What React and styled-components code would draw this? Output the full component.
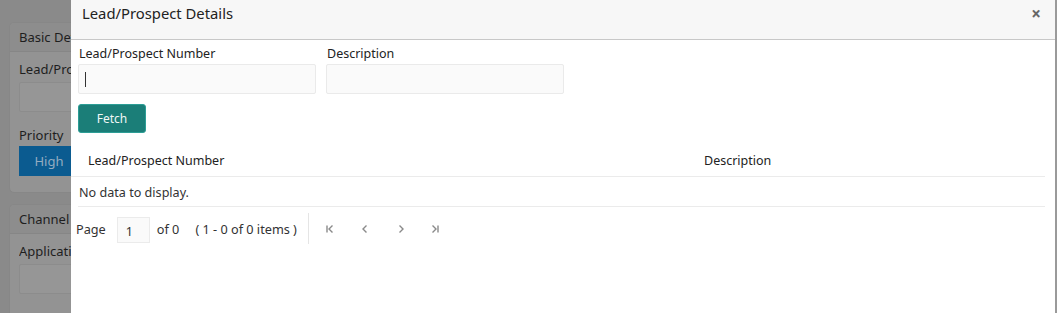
import React from "react";
import styled, { createGlobalStyle } from "styled-components";

const Global = createGlobalStyle`
  html, body { margin: 0; padding: 0; }
  body {
    width: 1057px; height: 313px; overflow: hidden;
    font-family: "Noto Sans", "Open Sans", sans-serif;
    background: #8a8a8a;
  }
`;

const Page = styled.div`
  position: relative;
  width: 1057px;
  height: 313px;
  overflow: hidden;
  background: #8a8a8a;
  padding: 22px 0 0 9px;
  box-sizing: border-box;
  display: flex;
  flex-direction: column;
  gap: 11px;
`;

const BgPanel = styled.div`
  width: 66px;
  background: #939393;
  border: 1px solid #878787;
  border-radius: 5px;
  overflow: hidden;
  flex-shrink: 0;
  white-space: nowrap;
`;

const BgPanelHead = styled.div`
  height: 28px;
  background: #8d8d8d;
  border-bottom: 1px solid #868686;
  padding-left: 9px;
  display: flex;
  align-items: center;
  font-size: 13px;
  color: #1e1e1e;
  overflow: hidden;
`;

const BgPanelBody = styled.div`
  padding: 7px 0 16px 9px;
  display: flex;
  flex-direction: column;
`;

const BgLabel = styled.div`
  font-size: 13px;
  color: #1e1e1e;
  height: 20px;
  line-height: 20px;
  overflow: hidden;
  margin-bottom: ${(p) => p.$mb}px;
`;

const BgInput = styled.div`
  height: 28px;
  background: #969696;
  border: 1px solid #8c8c8c;
  border-radius: 2px;
  margin-bottom: 13px;
`;

const BgButton = styled.div`
  width: 60px;
  height: 30px;
  background: #0b5b90;
  color: #93acc0;
  font-size: 13px;
  display: flex;
  align-items: center;
  justify-content: center;
`;

const Modal = styled.div`
  position: absolute;
  left: 71px;
  top: 0;
  width: 984px;
  height: 313px;
  background: #fff;
  border-right: 2px solid #9a9a9a;
  display: flex;
  flex-direction: column;
`;

const Header = styled.div`
  height: 40px;
  flex-shrink: 0;
  background: #f7f7f7;
  border-bottom: 1px solid #c8c8c8;
  display: flex;
  align-items: flex-start;
  justify-content: space-between;
  padding: 3px 14px 0 11px;
  box-sizing: border-box;
`;

const Title = styled.div`
  font-size: 14.8px;
  color: #222;
  line-height: 21px;
`;

const Close = styled.div`
  font-size: 17px;
  color: #666;
  line-height: 22px;
  font-weight: bold;
`;

const Body = styled.div`
  padding: 2px 10px 0 7px;
  display: flex;
  flex-direction: column;
`;

const FormRow = styled.div`
  display: flex;
  gap: 10px;
`;

const Field = styled.div`
  width: 238px;
  display: flex;
  flex-direction: column;
`;

const Label = styled.div`
  font-size: 12.5px;
  color: #222;
  height: 20px;
  line-height: 20px;
  padding-top: 2px;
  padding-left: 1px;
`;

const Input = styled.div`
  height: 28px;
  background: #fafafa;
  border: 1px solid #eaeaea;
  border-radius: 2px;
  display: flex;
  align-items: center;
  padding-left: 6px;
`;

const Caret = styled.div`
  width: 1px;
  height: 15px;
  background: #333;
`;

const FetchButton = styled.div`
  margin-top: 10px;
  width: 66px;
  height: 27px;
  background: #1b7e78;
  border: 1px solid #2d9e96;
  border-radius: 3px;
  color: #f0f7f6;
  font-size: 12px;
  display: flex;
  align-items: center;
  justify-content: center;
`;

const Table = styled.div`
  margin-top: 11px;
  margin-left: -7px;
  width: 974px;
  display: flex;
  flex-direction: column;
`;

const HeadRow = styled.div`
  display: flex;
  align-items: center;
  border-bottom: 1px solid #ebebeb;
  font-size: 12.5px;
  color: #222;
  padding-top: 1px;
  box-sizing: border-box;
  height: 33px;
`;

const HeadCell = styled.div`
  width: ${(p) => p.$w}px;
  padding-left: ${(p) => p.$pl}px;
  box-sizing: border-box;
`;

const EmptyRow = styled.div`
  margin-left: 7px;
  display: flex;
  align-items: center;
  border-bottom: 1px solid #ebebeb;
  font-size: 12.6px;
  color: #333;
  padding-left: 1px;
  padding-top: 1px;
  box-sizing: border-box;
  height: 30px;
`;

const Pager = styled.div`
  margin-top: 6px;
  display: flex;
  align-items: center;
  height: 31px;
  font-size: 12.7px;
  color: #333;
  margin-left: -2px;
`;

const PageInput = styled.div`
  margin-left: 11px;
  width: 33px;
  height: 26px;
  background: #fafafa;
  border: 1px solid #ebebeb;
  box-sizing: border-box;
  font-size: 12.5px;
  display: flex;
  align-items: flex-end;
  padding: 0 0 2px 8px;
  margin-top: 3px;
`;

const Text = styled.span`
  margin-left: ${(p) => p.$ml}px;
  white-space: pre;
`;

const Sep = styled.div`
  width: 1px;
  height: 31px;
  background: #e5e5e5;
  margin-left: 11px;
  margin-right: 14px;
`;

const NavBtn = styled.div`
  width: 14px;
  margin-right: ${(p) => p.$mr}px;
  display: flex;
  justify-content: center;
`;

const Icon = ({ d }) => (
  <svg width="10" height="10" viewBox="0 0 10 10" fill="none" stroke="#8a8a8a" strokeWidth="1.4">
    <path d={d} />
  </svg>
);

export default function App() {
  return (
    <>
      <Global />
      <Page>
        <BgPanel>
          <BgPanelHead>Basic Details</BgPanelHead>
          <BgPanelBody>
            <BgLabel $mb={3}>Lead/Prospect Number</BgLabel>
            <BgInput />
            <BgLabel $mb={1}>Priority</BgLabel>
            <BgButton>High</BgButton>
          </BgPanelBody>
        </BgPanel>
        <BgPanel>
          <BgPanelHead>Channel Details</BgPanelHead>
          <BgPanelBody>
            <BgLabel $mb={3}>Application Number</BgLabel>
            <BgInput />
          </BgPanelBody>
        </BgPanel>

        <Modal>
          <Header>
            <Title>Lead/Prospect Details</Title>
            <Close>×</Close>
          </Header>
          <Body>
            <FormRow>
              <Field>
                <Label>Lead/Prospect Number</Label>
                <Input>
                  <Caret />
                </Input>
              </Field>
              <Field>
                <Label>Description</Label>
                <Input />
              </Field>
            </FormRow>
            <div>
              <FetchButton>Fetch</FetchButton>
            </div>
            <Table>
              <HeadRow>
                <HeadCell $w={616} $pl={17}>Lead/Prospect Number</HeadCell>
                <HeadCell $w={300} $pl={17}>Description</HeadCell>
              </HeadRow>
              <EmptyRow>No data to display.</EmptyRow>
            </Table>
            <Pager>
              <Text $ml={0}>Page</Text>
              <PageInput>1</PageInput>
              <Text $ml={7}>of 0</Text>
              <Text $ml={16}>( 1 - 0 of 0 items )</Text>
              <Sep />
              <NavBtn $mr={21}>
                <Icon d="M2 1.5 V8.5 M7.5 1.5 L4 5 L7.5 8.5" />
              </NavBtn>
              <NavBtn $mr={22}>
                <Icon d="M6.5 1.5 L3 5 L6.5 8.5" />
              </NavBtn>
              <NavBtn $mr={20}>
                <Icon d="M3.5 1.5 L7 5 L3.5 8.5" />
              </NavBtn>
              <NavBtn $mr={0}>
                <Icon d="M8 1.5 V8.5 M2.5 1.5 L6 5 L2.5 8.5" />
              </NavBtn>
            </Pager>
          </Body>
        </Modal>
      </Page>
    </>
  );
}
